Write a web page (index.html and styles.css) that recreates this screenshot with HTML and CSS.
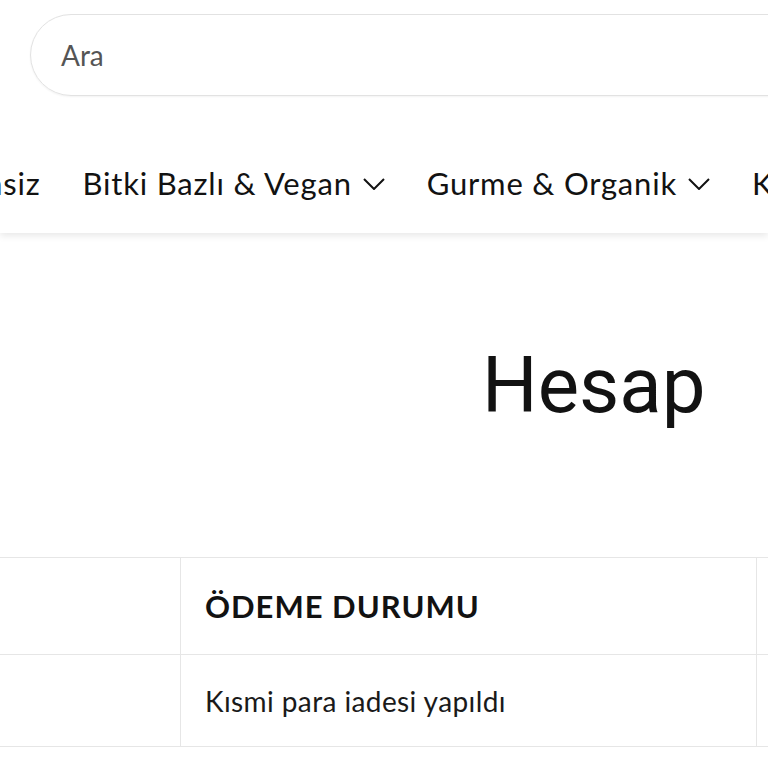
FILE: index.html
```html
<!DOCTYPE html>
<html lang="tr">
<head>
<meta charset="utf-8">
<title>Hesap</title>
<link rel="stylesheet" href="styles.css">
</head>
<body>
<header class="site-header">
  <div class="search-row">
    <div class="search-box"><span class="search-placeholder">Ara</span></div>
  </div>
  <nav class="main-nav">
    <a class="nav-item" href="#">asiz</a>
    <a class="nav-item" href="#">Bitki Bazlı &amp; Vegan
      <svg class="chev" viewBox="0 0 22 12" width="22" height="12"><path d="M1 1 L11 11 L21 1" fill="none" stroke="currentColor" stroke-width="2"/></svg></a>
    <a class="nav-item" href="#">Gurme &amp; Organik
      <svg class="chev" viewBox="0 0 22 12" width="22" height="12"><path d="M1 1 L11 11 L21 1" fill="none" stroke="currentColor" stroke-width="2"/></svg></a>
    <a class="nav-item" href="#">K</a>
  </nav>
</header>
<main class="account">
  <h1 class="page-title">Hesap</h1>
  <table class="orders">
    <colgroup>
      <col class="col-order">
      <col class="col-pay">
      <col class="col-ful">
    </colgroup>
    <thead>
      <tr>
        <th></th>
        <th>ÖDEME DURUMU</th>
        <th></th>
      </tr>
    </thead>
    <tbody>
      <tr>
        <td></td>
        <td>Kısmi para iadesi yapıldı</td>
        <td></td>
      </tr>
    </tbody>
  </table>
</main>
</body>
</html>
```

FILE: styles.css
```css
* { box-sizing: border-box; }
html, body {
  margin: 0;
  padding: 0;
  background: #fff;
  overflow: hidden;
  width: 768px;
  height: 768px;
}
body {
  font-family: "Lato", "Noto Sans", sans-serif;
  color: #121212;
}
.site-header {
  background: #fff;
  box-shadow: 0 3px 7px rgba(0, 0, 0, 0.09);
  position: relative;
  z-index: 1;
  padding-top: 14px;
}
.search-row {
  padding-left: 30px;
}
.search-box {
  width: 1100px;
  height: 82px;
  border: 1px solid #e2e2e2;
  border-radius: 41px;
  box-shadow: 0 1px 2px rgba(0, 0, 0, 0.05);
  display: flex;
  align-items: center;
  padding-left: 30px;
}
.search-placeholder {
  font-size: 28px;
  color: #555;
}
.main-nav {
  display: flex;
  align-items: center;
  gap: 42px;
  height: 97px;
  margin-top: 40px;
  padding-bottom: 4px;
  margin-left: -13px;
  white-space: nowrap;
}
.nav-item {
  display: flex;
  align-items: center;
  gap: 11px;
  font-size: 31px;
  letter-spacing: 0.8px;
  color: #121212;
  text-decoration: none;
}
.chev {
  margin-top: 2px;
}
.account {
  padding-top: 114px;
}
.page-title {
  margin: 0 0 132px;
  padding-left: 482px;
  font-family: "Roboto", sans-serif;
  font-weight: 400;
  font-size: 78px;
  line-height: 1;
  white-space: nowrap;
  color: #121212;
}
.orders {
  border-collapse: collapse;
  table-layout: fixed;
  width: 1256px;
  margin-left: -100px;
  white-space: nowrap;
}
.col-order { width: 280px; }
.col-pay { width: 576px; }
.col-ful { width: 400px; }
.orders th, .orders td {
  border: 1px solid #e6e6e6;
  text-align: left;
  vertical-align: middle;
  padding: 0 24px;
}
.orders th {
  height: 97px;
  font-size: 31px;
  letter-spacing: 1px;
  font-weight: 700;
}
.orders td {
  height: 92px;
  font-size: 28px;
  letter-spacing: 0.4px;
  font-weight: 400;
  color: #1a1a1a;
}
```
